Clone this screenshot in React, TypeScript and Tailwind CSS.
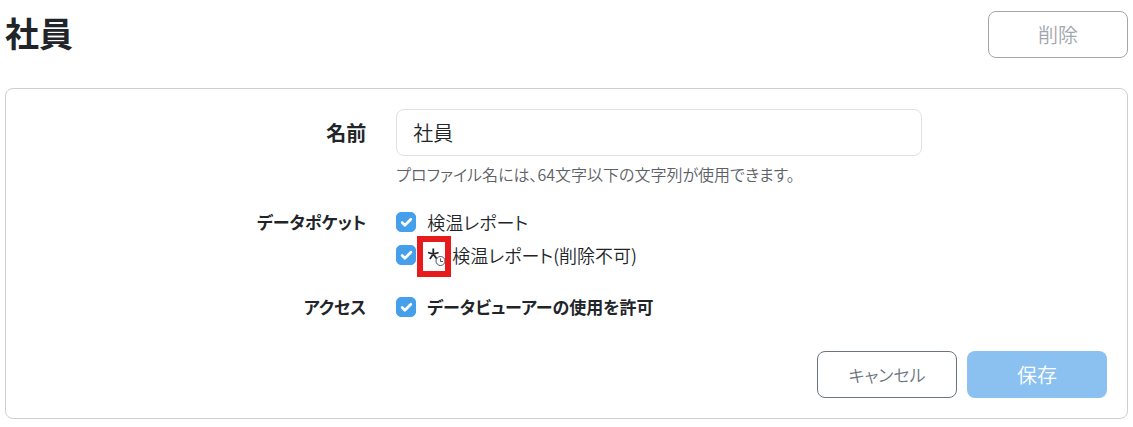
import React, { useState } from 'react';
import { Check } from 'lucide-react';

interface CheckItemProps {
  id: string;
  children: React.ReactNode;
  bold?: boolean;
}

interface FormRowProps {
  label: string;
  htmlFor?: string;
  children: React.ReactNode;
  tall?: boolean;
}

function CheckItem({ id, children, bold }: CheckItemProps) {
  const [checked, setChecked] = useState(true);

  return (
    <div className="flex items-center gap-[11px] h-[30px]">
      <span className="relative flex w-5 h-5 shrink-0">
        <input
          id={id}
          type="checkbox"
          checked={checked}
          onChange={(e) => setChecked(e.target.checked)}
          className="appearance-none w-5 h-5 rounded-[5px] border border-[#469fea] checked:bg-[#469fea]"
        />
        {checked && (
          <Check
            className="absolute inset-0 m-auto w-[13px] h-[13px] text-white pointer-events-none"
            strokeWidth={5}
            aria-hidden="true"
          />
        )}
      </span>
      <label
        htmlFor={id}
        className={`flex items-center leading-[30px] ${bold ? 'text-[17px] font-bold' : 'text-lg'}`}
      >
        {children}
      </label>
    </div>
  );
}

function FormRow({ label, htmlFor, children, tall }: FormRowProps) {
  return (
    <div className="-mx-[15px] grid grid-cols-12">
      <div
        className={`col-span-4 px-[15px] text-right font-bold ${
          tall ? 'text-xl leading-[47px]' : 'text-[17px] leading-[30px]'
        }`}
      >
        {htmlFor ? <label htmlFor={htmlFor}>{label}</label> : <span>{label}</span>}
      </div>
      <div className="col-span-6 px-[15px]">{children}</div>
    </div>
  );
}

function ScheduledMark() {
  return (
    <span className="relative flex w-[25px] h-[30px]">
      <svg viewBox="0 0 20 22" className="w-5 h-[22px] mt-1" fill="none" aria-hidden="true">
        <path d="M6.3 4.5V10M1 8.5L6.3 10L11.6 8.5M6.3 10L2.8 15M6.3 10L9.8 15" stroke="#212529" strokeWidth="1.8" />
        <circle cx="13.5" cy="17" r="4.5" fill="#fff" stroke="#50565c" />
        <path d="M13.5 14.5V17.5H16" stroke="#50565c" />
      </svg>
      {/* Highlight frame around the mark */}
      <span className="absolute -left-[10px] -top-1 w-[34px] h-[41px] border-6 border-[#e71b1c] pointer-events-none" />
    </span>
  );
}

export default function App() {
  const [name, setName] = useState('社員');

  return (
    <main className='bg-white text-[#212529] text-xl leading-[30px] font-[350] px-[5px] pt-[11px] pb-2 [font-family:"Noto_Sans_CJK_JP",sans-serif] [font-feature-settings:"palt"]'>
      <header className="flex items-start justify-between mb-[30px]">
        <h1 className="text-[34px] leading-[43px] font-bold">{name}</h1>
        <button
          type="button"
          disabled
          className="w-[140px] h-[47px] rounded-lg border border-[#a2a7ac] text-[#a2a7ac]"
        >
          削除
        </button>
      </header>

      <form
        onSubmit={(e) => e.preventDefault()}
        className="rounded-lg border border-[#cfcfcf] p-5"
      >
        <FormRow label="名前" htmlFor="profile-name" tall>
          <input
            id="profile-name"
            type="text"
            value={name}
            onChange={(e) => setName(e.target.value)}
            className="block w-full h-[47px] px-4 rounded-lg border border-[#dfe1e6]"
          />
          <p className="mt-[3px] text-base leading-[30px] text-[#5c6166]">
            プロファイル名には、64文字以下の文字列が使用できます。
          </p>
        </FormRow>

        <div className="mt-[18px]">
          <FormRow label="データポケット">
            <div className="flex flex-col gap-[3px]">
              <CheckItem id="pocket-report">検温レポート</CheckItem>
              <CheckItem id="pocket-report-locked">
                <ScheduledMark />
                検温レポート(削除不可)
              </CheckItem>
            </div>
          </FormRow>
        </div>

        <div className="mt-[22px]">
          <FormRow label="アクセス">
            <CheckItem id="access-viewer" bold>
              データビューアーの使用を許可
            </CheckItem>
          </FormRow>
        </div>

        <div className="mt-[29px] flex justify-end gap-[10px]">
          <button
            type="button"
            className="w-[140px] h-[47px] rounded-lg border border-[#6c757d] text-[17px] text-[#6c757d]"
          >
            キャンセル
          </button>
          <button type="submit" disabled className="w-[140px] h-[47px] rounded-lg bg-[#8bc1f1] text-white">
            保存
          </button>
        </div>
      </form>
    </main>
  );
}
